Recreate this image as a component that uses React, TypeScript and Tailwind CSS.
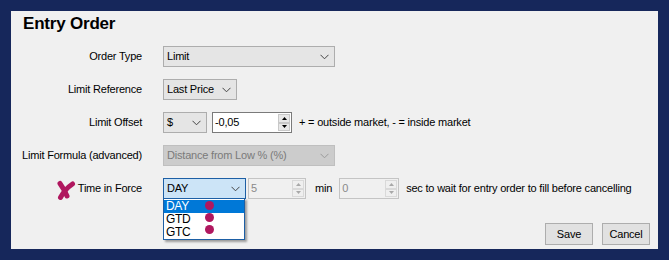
import React from "react";

const FONT = { fontFamily: '"Liberation Sans", Arial, sans-serif' };

function Chevron({ color = "#333" }: { color?: string }) {
  return (
    <svg width="9" height="6" viewBox="0 0 9 6" className="shrink-0">
      <path d="M0.5 0.8 L4.5 4.8 L8.5 0.8" fill="none" stroke={color} strokeWidth="1" />
    </svg>
  );
}

function Combo({
  w,
  text,
  variant = "normal",
}: {
  w: string;
  text: string;
  variant?: "normal" | "disabled" | "focus";
}) {
  const cls =
    variant === "disabled"
      ? "bg-[#cccccc] border-[#bfbfbf] text-[#7a7a7a]"
      : variant === "focus"
      ? "bg-[#cce4f7] border-[#1d5fa5] text-black"
      : "bg-[#e5e5e5] border-[#adadad] text-black";
  return (
    <div className={`${w} h-[21px] border ${cls} flex items-center justify-between pl-[3px] pr-[5px] whitespace-nowrap`}>
      <span className="leading-none">{text}</span>
      <Chevron color={variant === "disabled" ? "#9a9a9a" : "#444"} />
    </div>
  );
}

function Tri({ up, color }: { up: boolean; color: string }) {
  return (
    <svg width="5" height="3" viewBox="0 0 5 3">
      <path d={up ? "M0 3 L2.5 0 L5 3 Z" : "M0 0 L2.5 3 L5 0 Z"} fill={color} />
    </svg>
  );
}

function Spinner({ disabled }: { disabled?: boolean }) {
  const c = disabled ? "#a8a8a8" : "#000";
  const b = disabled ? "border-[#d9d9d9] bg-[#efefef]" : "border-[#c8c8c8] bg-[#e8e8e8]";
  return (
    <div className="flex flex-col w-[13px] h-full py-[1px] pr-[1px] gap-0">
      <div className={`flex-1 border ${b} flex items-center justify-center`}>
        <Tri up color={c} />
      </div>
      <div className={`flex-1 border ${b} flex items-center justify-center`}>
        <Tri up={false} color={c} />
      </div>
    </div>
  );
}

function NumBox({ w, text, disabled }: { w: string; text: string; disabled?: boolean }) {
  const cls = disabled
    ? "bg-[#f0f0f0] border-[#c4c4c4] text-[#8a8a8a]"
    : "bg-white border-[#7a7a7a] text-black";
  return (
    <div className={`${w} h-[21px] border ${cls} flex items-stretch justify-between pl-[2px]`}>
      <span className="flex items-center leading-none">{text}</span>
      <Spinner disabled={disabled} />
    </div>
  );
}

function Row({ label, children }: { label: string; children: React.ReactNode }) {
  return (
    <div className="flex items-center h-[21px] whitespace-nowrap">
      <div className="w-[119px] shrink-0 flex justify-end leading-none whitespace-nowrap">{label}</div>
      <div className="ml-[21px] flex items-center">{children}</div>
    </div>
  );
}

function Btn({ text }: { text: string }) {
  return (
    <div className="w-[48px] h-[22px] border border-[#adadad] bg-[#e1e1e1] flex items-center justify-center leading-none">
      {text}
    </div>
  );
}

export default function App() {
  return (
    <div
      className="w-[669px] h-[260px] bg-[#16275b] p-[11px] text-[11px] tracking-[-0.2px] text-black"
      style={FONT}
    >
      <div className="relative w-[647px] h-[238px] bg-[#f0f0f0] pl-[12px] pt-[3px] flex flex-col">
        <div className="text-[17px] font-bold leading-[19px] h-[19px] tracking-[-0.2px]">Entry Order</div>
        <div className="mt-[13px] flex flex-col gap-[12px]">
          <Row label="Order Type">
            <Combo w="w-[172px]" text="Limit" />
          </Row>
          <Row label="Limit Reference">
            <Combo w="w-[74px]" text="Last Price" />
          </Row>
          <Row label="Limit Offset">
            <Combo w="w-[44px]" text="$" />
            <div className="ml-[5px]">
              <NumBox w="w-[80px]" text="-0,05" />
            </div>
            <span className="ml-[7px] leading-none">+ = outside market, - = inside market</span>
          </Row>
          <Row label="Limit Formula (advanced)">
            <Combo w="w-[172px]" text="Distance from Low % (%)" variant="disabled" />
          </Row>
          <Row label="Time in Force">
            <div className="relative">
              <Combo w="w-[83px]" text="DAY" variant="focus" />
              <div className="absolute left-0 top-[20px] w-[82px] h-[42px] border border-[#1d5fa5] bg-white shadow-[2px_2px_2px_rgba(0,0,0,0.35)] z-10 flex flex-col py-[1px] text-[12px] tracking-[-0.3px]">
                <div className="h-[13px] bg-[#0078d7] text-white pl-[2px] flex items-center leading-none">DAY</div>
                <div className="h-[13px] pl-[2px] flex items-center leading-none">GTD</div>
                <div className="h-[13px] pl-[2px] flex items-center leading-none">GTC</div>
                <div className="absolute left-[41px] top-[2px] w-[9px] h-[9px] rounded-full bg-[#b0175f]" />
                <div className="absolute left-[41px] top-[14px] w-[9px] h-[9px] rounded-full bg-[#b0175f]" />
                <div className="absolute left-[41px] top-[26px] w-[9px] h-[9px] rounded-full bg-[#b0175f]" />
              </div>
            </div>
            <div className="ml-[2px]">
              <NumBox w="w-[58px]" text="5" disabled />
            </div>
            <span className="ml-[9px] leading-none">min</span>
            <div className="ml-[7px]">
              <NumBox w="w-[60px]" text="0" disabled />
            </div>
            <span className="ml-[7px] leading-none">sec to wait for entry order to fill before cancelling</span>
          </Row>
        </div>
        <div className="mt-auto mb-[4px] mr-[8px] flex justify-end gap-[9px]">
          <Btn text="Save" />
          <Btn text="Cancel" />
        </div>
        <svg
          className="absolute left-[45px] top-[168px]"
          width="20"
          height="23"
          viewBox="0 0 20 23"
        >
          <path d="M4 4.5 Q8 10 11 17" fill="none" stroke="#b0175f" strokeWidth="5" strokeLinecap="round" />
          <path d="M16.5 5 Q9 10 4.5 18.5" fill="none" stroke="#b0175f" strokeWidth="5" strokeLinecap="round" />
        </svg>
      </div>
    </div>
  );
}
